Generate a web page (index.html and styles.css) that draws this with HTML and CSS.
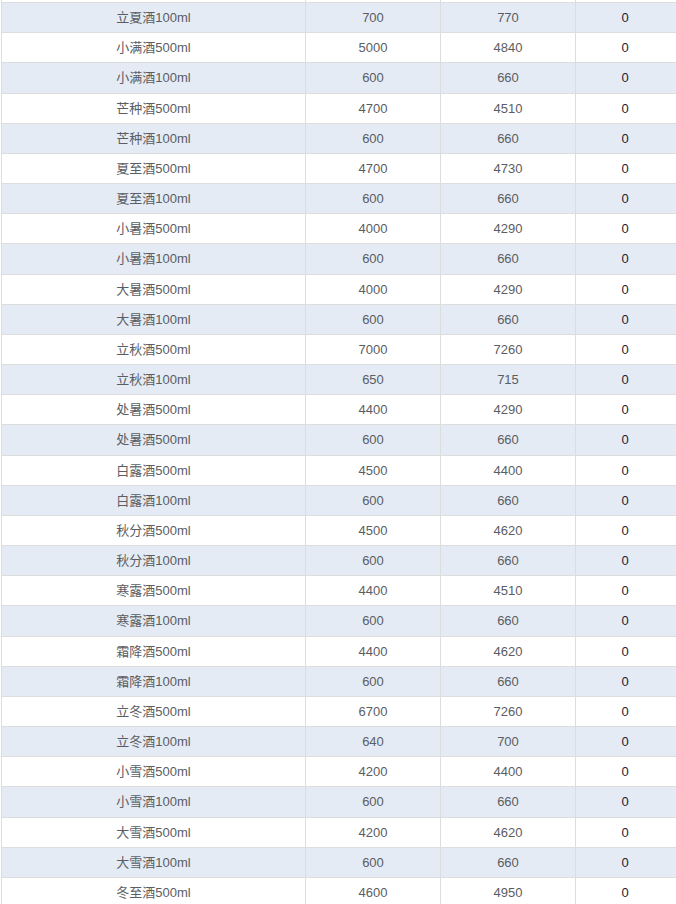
FILE: index.html
```html
<!DOCTYPE html>
<html lang="zh-CN">
<head>
<meta charset="utf-8">
<title>酒品价格表</title>
<link rel="stylesheet" href="styles.css">
</head>
<body>
<table class="grid">
<colgroup>
<col class="c1"><col class="c2"><col class="c3"><col class="c4">
</colgroup>
<tbody>
<tr class="stub"><td></td><td></td><td></td><td class="z"></td></tr>
<tr class="s"><td>立夏酒100ml</td><td>700</td><td>770</td><td class="z">0</td></tr>
<tr><td>小满酒500ml</td><td>5000</td><td>4840</td><td class="z">0</td></tr>
<tr class="s"><td>小满酒100ml</td><td>600</td><td>660</td><td class="z">0</td></tr>
<tr><td>芒种酒500ml</td><td>4700</td><td>4510</td><td class="z">0</td></tr>
<tr class="s"><td>芒种酒100ml</td><td>600</td><td>660</td><td class="z">0</td></tr>
<tr><td>夏至酒500ml</td><td>4700</td><td>4730</td><td class="z">0</td></tr>
<tr class="s"><td>夏至酒100ml</td><td>600</td><td>660</td><td class="z">0</td></tr>
<tr><td>小暑酒500ml</td><td>4000</td><td>4290</td><td class="z">0</td></tr>
<tr class="s"><td>小暑酒100ml</td><td>600</td><td>660</td><td class="z">0</td></tr>
<tr><td>大暑酒500ml</td><td>4000</td><td>4290</td><td class="z">0</td></tr>
<tr class="s"><td>大暑酒100ml</td><td>600</td><td>660</td><td class="z">0</td></tr>
<tr><td>立秋酒500ml</td><td>7000</td><td>7260</td><td class="z">0</td></tr>
<tr class="s"><td>立秋酒100ml</td><td>650</td><td>715</td><td class="z">0</td></tr>
<tr><td>处暑酒500ml</td><td>4400</td><td>4290</td><td class="z">0</td></tr>
<tr class="s"><td>处暑酒500ml</td><td>600</td><td>660</td><td class="z">0</td></tr>
<tr><td>白露酒500ml</td><td>4500</td><td>4400</td><td class="z">0</td></tr>
<tr class="s"><td>白露酒100ml</td><td>600</td><td>660</td><td class="z">0</td></tr>
<tr><td>秋分酒500ml</td><td>4500</td><td>4620</td><td class="z">0</td></tr>
<tr class="s"><td>秋分酒100ml</td><td>600</td><td>660</td><td class="z">0</td></tr>
<tr><td>寒露酒500ml</td><td>4400</td><td>4510</td><td class="z">0</td></tr>
<tr class="s"><td>寒露酒100ml</td><td>600</td><td>660</td><td class="z">0</td></tr>
<tr><td>霜降酒500ml</td><td>4400</td><td>4620</td><td class="z">0</td></tr>
<tr class="s"><td>霜降酒100ml</td><td>600</td><td>660</td><td class="z">0</td></tr>
<tr><td>立冬酒500ml</td><td>6700</td><td>7260</td><td class="z">0</td></tr>
<tr class="s"><td>立冬酒100ml</td><td>640</td><td>700</td><td class="z">0</td></tr>
<tr><td>小雪酒500ml</td><td>4200</td><td>4400</td><td class="z">0</td></tr>
<tr class="s"><td>小雪酒100ml</td><td>600</td><td>660</td><td class="z">0</td></tr>
<tr><td>大雪酒500ml</td><td>4200</td><td>4620</td><td class="z">0</td></tr>
<tr class="s"><td>大雪酒100ml</td><td>600</td><td>660</td><td class="z">0</td></tr>
<tr><td>冬至酒500ml</td><td>4600</td><td>4950</td><td class="z">0</td></tr>
</tbody>
</table>
</body>
</html>
```

FILE: styles.css
```css
html, body {
  margin: 0;
  padding: 0;
  background: #ffffff;
  overflow: hidden;
  height: 904px;
}
.grid {
  margin: -27.1667px 0 0 1px;
  border-collapse: separate;
  border-spacing: 0;
  table-layout: fixed;
  width: 675px;
  border-left: 1px solid #dddddd;
  font-family: "Liberation Sans", "Noto Sans CJK SC", sans-serif;
  font-size: 13px;
  color: #5a5d63;
}
.c1 { width: 304px; }
.c2 { width: 135px; }
.c3 { width: 135px; }
.c4 { width: 100px; }
.grid td {
  padding: 6px 0;
  line-height: 17.1667px;
  height: 17.1667px;
  text-align: center;
  white-space: nowrap;
  border-right: 1px solid #dddddd;
  border-bottom: 1px solid #dddddd;
}
.grid td:last-child {
  border-right: none;
  padding-right: 2px;
}
.grid tr.s td {
  background: #e4ebf5;
}
.grid td.z {
  color: #1f2233;
}
```
